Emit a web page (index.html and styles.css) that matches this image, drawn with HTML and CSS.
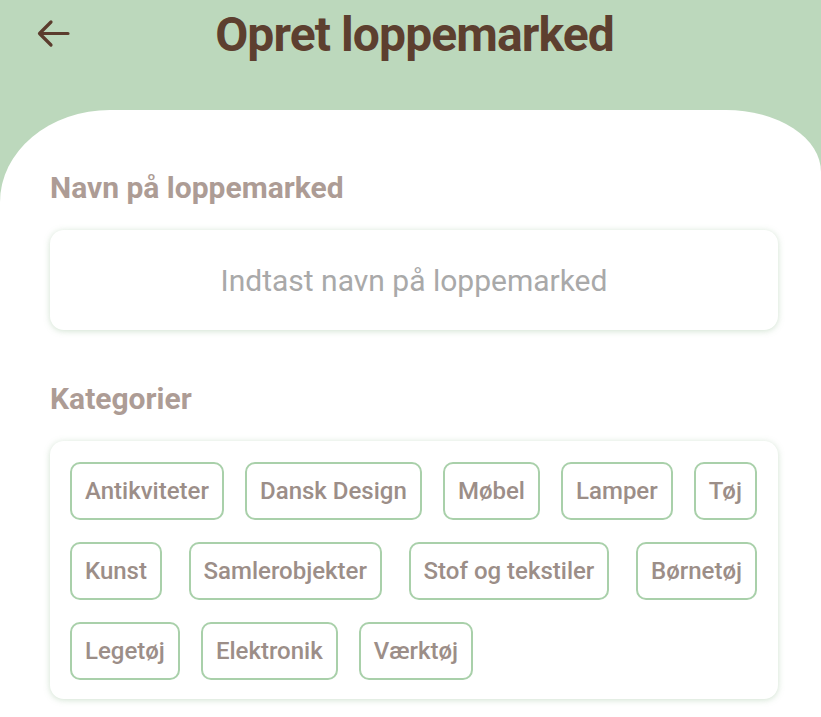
FILE: index.html
```html
<!DOCTYPE html>
<html lang="da">
<head>
<meta charset="utf-8">
<title>Opret loppemarked</title>
<link rel="stylesheet" href="styles.css">
</head>
<body>
<div class="screen">
  <header class="topbar">
    <button class="back" aria-label="Tilbage">
      <svg width="34" height="30" viewBox="0 0 34 30"><path d="M32 14.5H4M15 3L3.5 14.5L15 26" fill="none" stroke="#5b3c2d" stroke-width="3.2" stroke-linecap="round" stroke-linejoin="round"/></svg>
    </button>
    <h1 class="title">Opret loppemarked</h1>
  </header>
  <main class="sheet">
    <h2 class="label label-name">Navn på loppemarked</h2>
    <div class="input-box">
      <input class="input" type="text" placeholder="Indtast navn på loppemarked">
    </div>
    <h2 class="label label-cat">Kategorier</h2>
    <div class="chip-box">
      <div class="chip-row spread">
        <span class="chip">Antikviteter</span>
        <span class="chip">Dansk Design</span>
        <span class="chip">Møbel</span>
        <span class="chip">Lamper</span>
        <span class="chip">Tøj</span>
      </div>
      <div class="chip-row spread">
        <span class="chip">Kunst</span>
        <span class="chip">Samlerobjekter</span>
        <span class="chip">Stof og tekstiler</span>
        <span class="chip">Børnetøj</span>
      </div>
      <div class="chip-row">
        <span class="chip">Legetøj</span>
        <span class="chip">Elektronik</span>
        <span class="chip">Værktøj</span>
      </div>
    </div>
  </main>
</div>
</body>
</html>
```

FILE: styles.css
```css
* { box-sizing: border-box; }
html, body {
  margin: 0;
  padding: 0;
  height: 100%;
  overflow: hidden;
}
body {
  background: #bcd8bc;
  font-family: Roboto, "Noto Sans", "Liberation Sans", sans-serif;
}
.screen {
  display: flex;
  flex-direction: column;
  height: 100%;
}
.topbar {
  position: relative;
  height: 110px;
  display: flex;
  justify-content: center;
}
.back {
  position: absolute;
  left: 36px;
  top: 19px;
  background: none;
  border: 0;
  padding: 0;
  width: 34px;
  height: 30px;
}
.back svg { display: block; }
.title {
  margin: 0;
  padding-top: 9px;
  padding-left: 8px;
  font-size: 48px;
  line-height: 52px;
  font-weight: 700;
  color: #5d3f2f;
  letter-spacing: -0.9px;
}
.sheet {
  flex: 1;
  background: #ffffff;
  border-radius: 110px 95px 0 0 / 92px 62px 0 0;
  padding: 59px 43px 0 50px;
}
.label {
  margin: 0;
  font-size: 30px;
  line-height: 38px;
  font-weight: 700;
  color: #ad9c95;
}
.label-cat { margin-top: 50px; }
.input-box {
  margin-top: 23px;
  height: 100px;
  background: #fff;
  border-radius: 14px;
  box-shadow: 0 1px 6px rgba(120, 170, 120, 0.35);
  display: flex;
  align-items: center;
  justify-content: center;
}
.input {
  width: 100%;
  border: 0;
  outline: none;
  background: transparent;
  text-align: center;
  font-family: inherit;
  font-size: 30px;
  color: #9e9e9e;
}
.input::placeholder { color: #a9a9a9; }
.chip-box {
  margin-top: 23px;
  background: #fff;
  border-radius: 14px;
  box-shadow: 0 1px 6px rgba(120, 170, 120, 0.35);
  padding: 21px 21px 19px 20px;
  display: flex;
  flex-direction: column;
  gap: 22px;
}
.chip-row {
  display: flex;
  gap: 21px;
}
.chip-row.spread { justify-content: space-between; }
.chip {
  height: 58px;
  display: flex;
  align-items: center;
  padding: 0 13px;
  border: 2px solid #a9d0aa;
  border-radius: 10px;
  font-size: 24px;
  font-weight: 500;
  color: #9c8e88;
  white-space: nowrap;
}
```
